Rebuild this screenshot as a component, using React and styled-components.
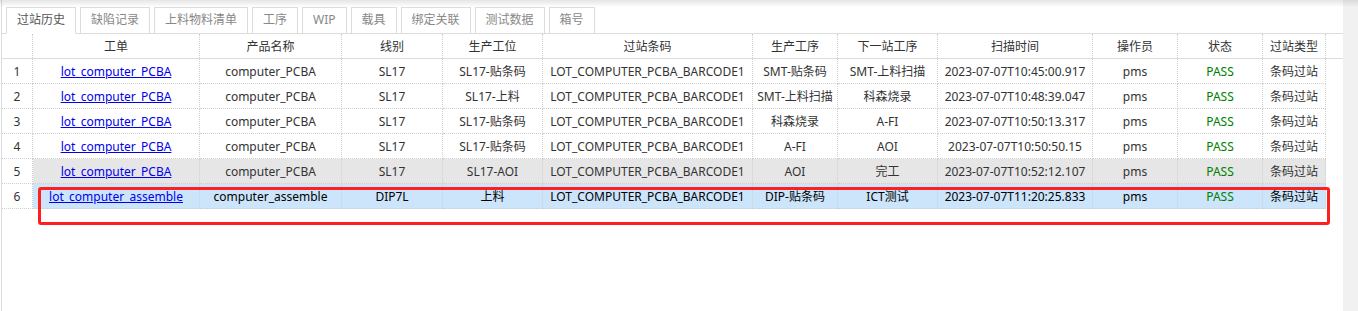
import styled, { createGlobalStyle } from "styled-components";

const GlobalStyle = createGlobalStyle`
  html, body {
    margin: 0;
    padding: 0;
    background: #fff;
  }
  body {
    font-family: "Noto Sans", "Noto Sans CJK SC", sans-serif;
    font-size: 12px;
    color: #333;
  }
`;

const tabs = ["过站历史", "缺陷记录", "上料物料清单", "工序", "WIP", "载具", "绑定关联", "测试数据", "箱号"];

const columns = [
  { title: "", width: 31 },
  { title: "工单", width: 167 },
  { title: "产品名称", width: 142 },
  { title: "线别", width: 101 },
  { title: "生产工位", width: 100 },
  { title: "过站条码", width: 210 },
  { title: "生产工序", width: 85 },
  { title: "下一站工序", width: 100 },
  { title: "扫描时间", width: 155 },
  { title: "操作员", width: 85 },
  { title: "状态", width: 85 },
  { title: "过站类型", width: 63 },
];

const rows = [
  ["lot_computer_PCBA", "computer_PCBA", "SL17", "SL17-贴条码", "LOT_COMPUTER_PCBA_BARCODE1", "SMT-贴条码", "SMT-上料扫描", "2023-07-07T10:45:00.917"],
  ["lot_computer_PCBA", "computer_PCBA", "SL17", "SL17-上料", "LOT_COMPUTER_PCBA_BARCODE1", "SMT-上料扫描", "科森烧录", "2023-07-07T10:48:39.047"],
  ["lot_computer_PCBA", "computer_PCBA", "SL17", "SL17-贴条码", "LOT_COMPUTER_PCBA_BARCODE1", "科森烧录", "A-FI", "2023-07-07T10:50:13.317"],
  ["lot_computer_PCBA", "computer_PCBA", "SL17", "SL17-贴条码", "LOT_COMPUTER_PCBA_BARCODE1", "A-FI", "AOI", "2023-07-07T10:50:50.15"],
  ["lot_computer_PCBA", "computer_PCBA", "SL17", "SL17-AOI", "LOT_COMPUTER_PCBA_BARCODE1", "AOI", "完工", "2023-07-07T10:52:12.107"],
  ["lot_computer_assemble", "computer_assemble", "DIP7L", "上料", "LOT_COMPUTER_PCBA_BARCODE1", "DIP-贴条码", "ICT测试", "2023-07-07T11:20:25.833"],
];

const rowState = ["", "", "", "", "hover", "selected"];

const App = () => {
  return (
    <Page>
      <GlobalStyle />
      <Panel>
        <TabStrip>
          {tabs.map((t, i) => (
            <Tab key={t} $active={i === 0}>
              {t}
            </Tab>
          ))}
        </TabStrip>
        <HeadWrap>
          <Grid>
            <colgroup>
              {columns.map((c, i) => (
                <col key={i} style={{ width: c.width }} />
              ))}
            </colgroup>
            <thead>
              <tr>
                {columns.map((c, i) => (
                  <HeadCell key={i}>{c.title}</HeadCell>
                ))}
              </tr>
            </thead>
          </Grid>
        </HeadWrap>
        <Grid>
          <colgroup>
            {columns.map((c, i) => (
              <col key={i} style={{ width: c.width }} />
            ))}
          </colgroup>
          <tbody>
            {rows.map((r, i) => (
              <tr key={i}>
                <IndexCell>{i + 1}</IndexCell>
                <Cell $state={rowState[i]}>
                  <OrderLink href="#">{r[0]}</OrderLink>
                </Cell>
                {r.slice(1).map((v, j) => (
                  <Cell key={j} $state={rowState[i]}>
                    {v}
                  </Cell>
                ))}
                <Cell $state={rowState[i]}>pms</Cell>
                <Cell $state={rowState[i]}>
                  <Pass>PASS</Pass>
                </Cell>
                <Cell $state={rowState[i]}>条码过站</Cell>
              </tr>
            ))}
          </tbody>
        </Grid>
      </Panel>
      <ScrollTrack />
      <TopShade />
      <Marker />
    </Page>
  );
};

export default App;

const Page = styled.div`
  position: relative;
  display: flex;
  height: 311px;
  width: 1358px;
  overflow: hidden;
`;

const Panel = styled.div`
  flex: 1;
  padding-top: 7px;
  margin-left: 1px;
  border-left: 1px solid #dcdcdc;
  background: #fff;
`;

const ScrollTrack = styled.div`
  width: 15px;
  background: #f1f1f1;
`;

const TopShade = styled.div`
  position: absolute;
  left: 0;
  top: 0;
  right: 0;
  height: 7px;
  background: linear-gradient(to bottom, rgba(0, 0, 0, 0.1), rgba(0, 0, 0, 0));
`;

const Marker = styled.div`
  position: absolute;
  left: 38px;
  top: 187px;
  width: 1292px;
  height: 38px;
  box-sizing: border-box;
  border: 3px solid #ff1f1f;
  border-radius: 3px;
`;

const TabStrip = styled.div`
  display: flex;
  align-items: flex-end;
  gap: 4px;
  height: 26px;
  padding-left: 4px;
  border-bottom: 1px solid #dcdcdc;
`;

const Tab = styled.div`
  position: relative;
  box-sizing: border-box;
  height: ${(p) => (p.$active ? "27px" : "26px")};
  margin-bottom: ${(p) => (p.$active ? "-1px" : "0")};
  padding: 0 10px;
  border: 1px solid #dcdcdc;
  border-bottom: ${(p) => (p.$active ? "1px solid #fff" : "none")};
  background: #fff;
  color: ${(p) => (p.$active ? "#555" : "#888")};
  line-height: 24px;
  white-space: nowrap;
`;

const HeadWrap = styled.div`
  border-bottom: 1px solid #dcdcdc;
`;

const Grid = styled.table`
  table-layout: fixed;
  border-collapse: separate;
  border-spacing: 0;
  width: 1323px;
`;

const HeadCell = styled.th`
  height: 24px;
  padding: 0;
  font-weight: normal;
  color: #333;
  text-align: center;
  border-right: 1px dotted #cfcfcf;
  white-space: nowrap;
`;

const Cell = styled.td`
  height: 24px;
  padding: 0;
  text-align: center;
  white-space: nowrap;
  overflow: hidden;
  border-right: 1px dotted #cfcfcf;
  border-bottom: 1px dotted #cfcfcf;
  color: ${(p) => (p.$state === "selected" ? "#000" : "#333")};
  background: ${(p) =>
    p.$state === "selected" ? "#cce5fb" : p.$state === "hover" ? "#e6e6e6" : "#fff"};
`;

const IndexCell = styled(Cell)`
  background: #fff;
  color: #333;
`;

const OrderLink = styled.a`
  color: #0000ee;
  text-decoration: underline;
`;

const Pass = styled.span`
  color: #008000;
`;
